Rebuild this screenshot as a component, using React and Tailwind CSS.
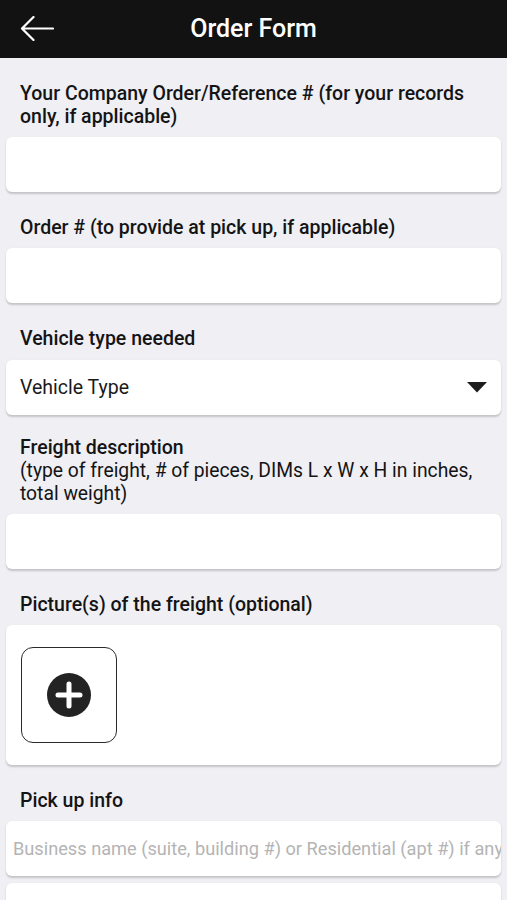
import React from "react";

function Label({ children }) {
    return (
        <div className="px-5 pb-[9px] pt-6 text-[19.5px] font-medium leading-[23px] text-[#141414]">
            {children}
        </div>
    );
}

function Field({ placeholder = "" }) {
    return (
        <div className="mx-[6px] h-[55px] rounded-md bg-white shadow-[0_1.5px_2px_rgba(0,0,0,0.18)]">
            <input
                type="text"
                placeholder={placeholder}
                className="h-full w-full bg-transparent pl-[7px] text-[18.2px] text-[#222] outline-none placeholder:text-[#b4b4b4]"
            />
        </div>
    );
}

export default function App() {
    return (
        <div
            className="min-h-[900px] bg-[#efeff4]"
            style={{ fontFamily: "Roboto, 'Noto Sans', sans-serif" }}
        >
            <header className="relative flex h-[58px] items-center justify-center bg-[#121212]">
                <button className="absolute left-5 top-[16px]">
                    <svg width="34" height="25" viewBox="0 0 34 25" fill="none">
                        <path
                            d="M33 12.5H2M13.5 1L2 12.5L13.5 24"
                            stroke="white"
                            strokeWidth="2.2"
                            strokeLinecap="round"
                            strokeLinejoin="round"
                        />
                    </svg>
                </button>
                <h1 className="text-[25px] font-medium text-white">Order Form</h1>
            </header>

            <Label>
                Your Company Order/Reference # (for your records only, if applicable)
            </Label>
            <Field />

            <Label>Order # (to provide at pick up, if applicable)</Label>
            <Field />

            <div className="px-5 pb-[10px] pt-6 text-[19.5px] font-medium leading-[23px] text-[#141414]">
                Vehicle type needed
            </div>
            <div className="mx-[6px] flex h-[55px] items-center justify-between rounded-md bg-white pl-[14px] pr-[14px] shadow-[0_1.5px_2px_rgba(0,0,0,0.18)]">
                <span className="text-[19.5px] text-[#1a1a1a]">Vehicle Type</span>
                <svg width="20" height="11" viewBox="0 0 20 11">
                    <path d="M0 0H20L10 10.5Z" fill="#1e1e1e" />
                </svg>
            </div>

            <div className="px-5 pb-[9px] pt-[21px] leading-[23px] text-[#141414]">
                <div className="text-[19.5px] font-medium">Freight description</div>
                <div className="text-[19.3px]">
                    (type of freight, # of pieces, DIMs L x W x H in inches, total
                    weight)
                </div>
            </div>
            <Field />

            <Label>Picture(s) of the freight (optional)</Label>
            <div className="mx-[6px] flex h-[140px] items-center rounded-md bg-white px-[15px] shadow-[0_1.5px_2px_rgba(0,0,0,0.18)]">
                <button className="flex h-[96px] w-[96px] items-center justify-center rounded-xl border-[1.5px] border-[#2a2a2a]">
                    <svg width="44" height="44" viewBox="0 0 44 44">
                        <circle cx="22" cy="22" r="22" fill="#232323" />
                        <path
                            d="M22 11V33M11 22H33"
                            stroke="white"
                            strokeWidth="5"
                            strokeLinecap="round"
                        />
                    </svg>
                </button>
            </div>

            <Label>Pick up info</Label>
            <div className="flex flex-col gap-[7px]">
                <Field placeholder="Business name (suite, building #) or Residential (apt #) if any" />
                <Field />
            </div>
        </div>
    );
}
